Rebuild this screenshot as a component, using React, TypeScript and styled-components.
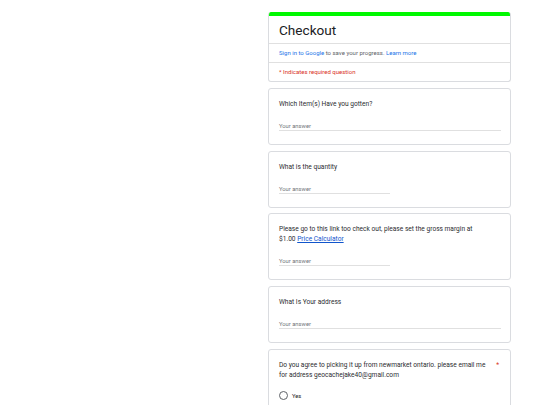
import React from "react";
import styled, { createGlobalStyle } from "styled-components";

const GlobalStyle = createGlobalStyle`
  html, body {
    margin: 0;
    padding: 0;
    background: #ffffff;
    font-family: Roboto, "Liberation Sans", Arial, sans-serif;
    color: #202124;
  }
`;

const Page = styled.div`
  display: flex;
  justify-content: flex-end;
  padding: 12px 29px 0 0;
`;

const Form = styled.div`
  width: 243px;
  display: flex;
  flex-direction: column;
  gap: 5.8px;
`;

const Card = styled.div`
  position: relative;
  background: #fff;
  border: 1px solid #dadce0;
  border-radius: 3px;
  padding: 10px 11px 13px 10px;
`;

const HeaderCard = styled.div`
  background: #fff;
  border: 1px solid #dadce0;
  border-top: none;
  border-radius: 3px;
  overflow: hidden;
`;

const TopBar = styled.div`
  height: 4px;
  background: #00f800;
  margin: 0 -1px;
`;

const HeaderSection = styled.div<{ $pad: string }>`
  padding: ${(p) => p.$pad};
  & + & {
    border-top: 1px solid #e0e0e0;
  }
`;

const Title = styled.div`
  font-size: 13.6px;
  line-height: 16px;
  color: #202124;
`;

const Small = styled.div<{ $red?: boolean }>`
  font-size: 6px;
  line-height: 8px;
  color: ${(p) => (p.$red ? "#d93025" : "#5f6368")};
`;

const Link = styled.span`
  color: #1a73e8;
`;

const Question = styled.div`
  font-size: 6.6px;
  line-height: 10px;
  color: #2b2c2f;
  padding-right: 10px;
`;

const InlineLink = styled.a`
  color: #1155cc;
  text-decoration: underline;
  line-height: 10px;
`;

const Required = styled.span`
  position: absolute;
  top: 10px;
  right: 11px;
  font-size: 6.6px;
  line-height: 10px;
  color: #d93025;
`;

const Answer = styled.div<{ $short?: boolean }>`
  margin-top: 10px;
  width: ${(p) => (p.$short ? "111px" : "222px")};
  height: 12px;
  padding-top: 3px;
  box-sizing: border-box;
  border-bottom: 1px solid #e0e0e0;
  font-size: 5.8px;
  line-height: 8px;
  color: #70757a;
`;

const Option = styled.label`
  display: flex;
  align-items: center;
  gap: 4px;
  margin-top: 11px;
  height: 10px;
  font-size: 5.8px;
  color: #202124;
`;

const Radio = styled.span`
  width: 7px;
  height: 7px;
  border: 1px solid #5f6368;
  border-radius: 50%;
`;

export default function App() {
  return (
    <>
      <GlobalStyle />
      <Page>
        <Form>
          <HeaderCard>
            <TopBar />
            <HeaderSection $pad="6px 10px 5px">
              <Title>Checkout</Title>
            </HeaderSection>
            <HeaderSection $pad="5px 10px">
              <Small>
                <Link>Sign in to Google</Link> to save your progress.{" "}
                <Link>Learn more</Link>
              </Small>
            </HeaderSection>
            <HeaderSection $pad="5px 10px 5px">
              <Small $red>* Indicates required question</Small>
            </HeaderSection>
          </HeaderCard>

          <Card>
            <Question>Which Item(s) Have you gotten?</Question>
            <Answer>Your answer</Answer>
          </Card>

          <Card>
            <Question>What is the quantity</Question>
            <Answer $short>Your answer</Answer>
          </Card>

          <Card>
            <Question>
              Please go to this link too check out, please set the gross margin at
              $1.00 <InlineLink>Price Calculator</InlineLink>
            </Question>
            <Answer $short>Your answer</Answer>
          </Card>

          <Card>
            <Question>What Is Your address</Question>
            <Answer>Your answer</Answer>
          </Card>

          <Card>
            <Question>
              Do you agree to picking it up from newmarket ontario. please email me
              for address geocachejake40@gmail.com
            </Question>
            <Required>*</Required>
            <Option>
              <Radio />
              Yes
            </Option>
          </Card>
        </Form>
      </Page>
    </>
  );
}
